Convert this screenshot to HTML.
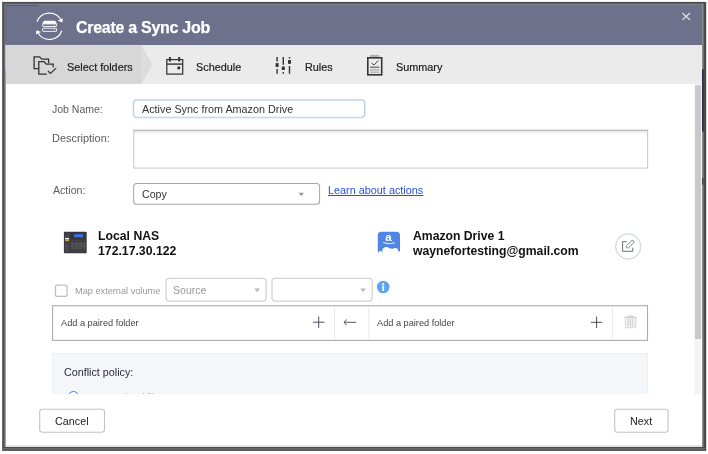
<!DOCTYPE html>
<html>
<head>
<meta charset="utf-8">
<title>Create a Sync Job</title>
<style>
  html, body { margin: 0; padding: 0; }
  body {
    width: 708px; height: 454px; overflow: hidden; background: #fff;
    font-family: "Liberation Sans", sans-serif; color: #333;
    position: relative;
  }
  .abs { position: absolute; }
  .t { position: absolute; white-space: nowrap; line-height: 14px; z-index: 3; will-change: transform; }
  .steplbl { font-size: 10.85px; color: #222; top: 60.1px; -webkit-text-stroke: 0.2px #222; }
  .lbl { font-size: 10.6px; color: #5c5c5c; }
  svg.bg { z-index: 0; }
  svg.boxes { z-index: 1; }
  svg { position: absolute; left: 0; top: 0; overflow: visible; z-index: 2; pointer-events: none; }
</style>
</head>
<body>
<!-- window frame, header and step bar backgrounds -->
<svg class="bg" width="708" height="454" viewBox="0 0 708 454">
  <rect x="2.2" y="1.9" width="704" height="449" fill="#4c4c4c"/>
  <rect x="2.2" y="1.9" width="0.9" height="449" fill="#686868"/>
  <rect x="3" y="448.2" width="702" height="1.3" fill="#707070"/>
  <rect x="5.2" y="4.7" width="697" height="442.1" fill="#fff"/>
  <rect x="5.2" y="444.9" width="697" height="1.9" fill="#e6e6e6"/>
  <rect x="5.2" y="4.7" width="697" height="40.5" fill="#6d718c"/>
  <rect x="5.2" y="45.2" width="697" height="38.6" fill="#ebebeb"/>
  <path d="M141 45.2 H141.6 L152.5 64.5 L141.6 83.8 H141 Z" fill="#dcdcdc"/>
  <rect x="5.2" y="45.2" width="136.2" height="38.6" fill="#d7d7d7"/>
  <rect x="5.2" y="4.7" width="33" height="1" fill="#46528e"/>
  <rect x="5.2" y="4.7" width="0.9" height="40" fill="#505c96"/>
  <rect x="4.4" y="3.7" width="699" height="1" fill="#7e8294"/>
  <rect x="4.4" y="3.7" width="0.9" height="67" fill="#7e8298"/>
  <rect x="4.4" y="70.6" width="1.3" height="376.2" fill="#888"/>
  <rect x="702" y="3.7" width="1.5" height="65.6" fill="#8e8e8e"/>
  <rect x="702" y="69.3" width="1.5" height="62.4" fill="#2c3040"/>
  <rect x="702" y="131.7" width="1.5" height="315.2" fill="#8c8c8c"/>
  <rect x="702" y="178" width="1.5" height="6.6" fill="#444"/>
  <rect x="694.3" y="83.8" width="6.9" height="310.4" fill="#f4f4f4"/>
  <rect x="695" y="85.2" width="6.2" height="253.8" fill="#c9c9c9"/>
</svg>
<div class="t" style="left:76.2px;top:17.8px;font-size:16px;letter-spacing:-0.28px;font-weight:bold;color:#fff;line-height:20px;-webkit-text-stroke:0.25px #fff">Create a Sync Job</div>

<!-- input boxes, table and buttons -->
<svg class="boxes" width="708" height="454" viewBox="0 0 708 454" fill="#fff">
  <defs>
    <linearGradient id="tashade" x1="0" y1="0" x2="0" y2="1">
      <stop offset="0" stop-color="#000" stop-opacity="0.09"/>
      <stop offset="1" stop-color="#000" stop-opacity="0"/>
    </linearGradient>
  </defs>
  <!-- job name -->
  <rect x="133.65" y="100.1" width="230.95" height="17.2" rx="3" fill="none" stroke="#8fb2ea" stroke-opacity="0.2" stroke-width="2.8"/>
  <rect x="133.65" y="100.1" width="230.95" height="17.2" rx="3" stroke="#bacdec" stroke-width="1.1"/>
  <!-- description -->
  <rect x="133.8" y="130.4" width="513.8" height="37.7" stroke="#cbcbcb" stroke-width="1.1"/>
  <rect x="134.4" y="131" width="512.6" height="4" fill="url(#tashade)"/>
  <path d="M133.3 130.4 H648.1" stroke="#bdbdbd" stroke-width="1.1"/>
  <!-- action select -->
  <rect x="133.65" y="183.5" width="185.95" height="20.7" rx="3" stroke="#a8a8a8" stroke-width="1.05"/>
  <!-- checkbox -->
  <rect x="55.45" y="285.1" width="11.65" height="11.3" rx="2" stroke="#b9c0cb" stroke-width="1.3"/>
  <!-- source selects -->
  <rect x="166" y="278.3" width="100.1" height="22.8" rx="3" stroke="#d2d2d2" stroke-width="1.25"/>
  <rect x="272" y="278.3" width="100.2" height="22.8" rx="3" stroke="#d2d2d2" stroke-width="1.25"/>
  <!-- paired folder table -->
  <rect x="52.55" y="305.7" width="594.95" height="34.7" stroke="#adadad" stroke-width="1.1"/>
  <path d="M334.6 306.3 V339.8 M368.9 306.3 V339.8 M612.4 306.3 V339.8" stroke="#e8e8e8" stroke-width="1"/>
  <!-- buttons -->
  <rect x="39.7" y="409.25" width="64.8" height="22.95" rx="2.6" stroke="#c4c4c4" stroke-width="1.1"/>
  <rect x="614.7" y="409.25" width="53.4" height="22.95" rx="2.6" stroke="#c4c4c4" stroke-width="1.1"/>
</svg>

<!-- all icons drawn in page coordinates -->
<svg width="708" height="454" viewBox="0 0 708 454" fill="none">
  <!-- sync logo -->
  <g stroke="#fff" stroke-width="1.2" fill="none">
    <path d="M37 21.8 A13.2 13.2 0 0 1 60.6 19.3"/>
    <path d="M61.8 30.8 A13.2 13.2 0 0 1 38.2 33.3"/>
  </g>
  <path d="M57.7 20.6 L62.9 18.2 L62.3 22.4 Z" fill="#fff"/>
  <path d="M41.1 32 L35.9 34.4 L36.5 30.2 Z" fill="#fff"/>
  <path d="M42.2 23.8 L43.5 21.5 Q43.8 20.8 44.6 20.8 H54.6 Q55.4 20.8 55.7 21.5 L57 23.8 Z" fill="#fff"/>
  <rect x="42.65" y="23.9" width="13.9" height="2.6" rx="0.4" stroke="#fff" stroke-width="0.9"/>
  <rect x="42.65" y="28.25" width="13.9" height="3.1" rx="0.4" stroke="#fff" stroke-width="0.9"/>
  <path d="M53.6 25.2 H55 M53.6 29.5 H55" stroke="#fff" stroke-width="0.5"/>

  <!-- close -->
  <path d="M682.4 13 L690 19.8 M690 13 L682.4 19.8" stroke="#e8e8f0" stroke-width="1.1"/>

  <!-- select folders icon -->
  <g stroke="#333" stroke-width="1.3" stroke-linejoin="miter">
    <path d="M38.7 68.6 H34.1 V56.8 H39.6 L41.9 59.1 H48.6 V63.2"/>
    <path d="M46.8 74.1 H38.8 V61.7 H44 L46.3 64.1 H53.2 V67.2"/>
    <path d="M47.9 71 L50.4 73.4 L56.2 68.1" stroke-width="1.2"/>
  </g>

  <!-- schedule icon -->
  <g stroke="#333">
    <rect x="166.8" y="59.6" width="15.9" height="14.5" stroke-width="1.25"/>
    <path d="M166.8 64.1 H182.7" stroke-width="1.4"/>
    <path d="M169.9 57 V61.4 M179.2 57 V61.4" stroke-width="1.9"/>
  </g>
  <rect x="177.4" y="66.5" width="2.8" height="2.8" fill="#333"/>

  <!-- rules icon -->
  <g stroke="#333" stroke-width="1.4">
    <path d="M277.1 57 V61.4 M277.1 69 V73.7"/>
    <path d="M283.3 57 V64.8 M283.3 72.1 V73.7"/>
    <path d="M289.5 57 V58.4 M289.5 66 V73.7"/>
  </g>
  <g fill="#333">
    <rect x="275.6" y="63.1" width="3" height="3.8"/>
    <rect x="281.8" y="66.5" width="3" height="3.5"/>
    <rect x="288" y="60.1" width="3" height="3.7"/>
  </g>

  <!-- summary icon -->
  <rect x="370.1" y="54.9" width="9.2" height="2" fill="#b0b0b0"/>
  <rect x="367.8" y="57.8" width="13.9" height="17" stroke="#333" stroke-width="1.6"/>
  <path d="M371.5 63 L374 65 L378.3 60.5" stroke="#333" stroke-width="0.9"/>
  <path d="M370.1 67.2 H379.3" stroke="#333" stroke-width="0.9"/>
  <rect x="370.1" y="69" width="9.2" height="4" fill="#d8d8d8"/>
  <path d="M370.1 69.8 H379.3 M370.1 72.3 H379.3" stroke="#aaa" stroke-width="0.9"/>

  <!-- select arrows -->
  <path d="M298.7 192.8 H303.9 L301.3 196.3 Z" fill="#999"/>
  <path d="M254.3 288.4 H259.9 L257.1 292.2 Z" fill="#b8b8b8"/>
  <path d="M360.3 288.4 H365.9 L363.1 292.2 Z" fill="#b8b8b8"/>
</svg>

<div class="t steplbl" style="left:66.9px">Select folders</div>
<div class="t steplbl" style="left:196.3px">Schedule</div>
<div class="t steplbl" style="left:304.8px">Rules</div>
<div class="t steplbl" style="left:396.4px">Summary</div>

<!-- form -->
<div class="t lbl" style="left:52.4px;top:102.2px;font-size:10.5px">Job Name:</div>
<div class="t" style="left:141.7px;top:102.1px;font-size:10.8px;color:#333">Active Sync from Amazon Drive</div>

<div class="t lbl" style="left:52.1px;top:131.4px;font-size:10.95px">Description:</div>

<div class="t lbl" style="left:53.1px;top:182.9px">Action:</div>
<div class="t" style="left:141.7px;top:187.2px;font-size:10.6px;color:#333">Copy</div>
<div class="t" style="left:328.2px;top:183.1px;font-size:10.85px;color:#2450e0;text-decoration:underline;text-underline-offset:1px;text-decoration-thickness:0.9px">Learn about actions</div>

<!-- NAS icon -->
<svg width="708" height="454" viewBox="0 0 708 454" fill="none">
  <rect x="63.9" y="231.8" width="22.8" height="21.5" rx="0.8" fill="#37373b"/>
  <rect x="64.6" y="232.6" width="5.6" height="19.9" fill="#434347"/>
  <rect x="74.1" y="234.2" width="8.9" height="3" fill="#3e72e6"/>
  <rect x="65.1" y="237.9" width="4" height="1.5" fill="#f4f0e6"/>
  <rect x="65.1" y="239.4" width="4" height="1.7" fill="#d9a040"/>
  <rect x="71" y="241.9" width="3.4" height="7.6" fill="#505055"/>
  <rect x="74.9" y="241.9" width="3.4" height="7.6" fill="#505055"/>
  <rect x="78.7" y="241.9" width="3.4" height="7.6" fill="#505055"/>
  <rect x="82.5" y="241.9" width="3.2" height="7.6" fill="#505055"/>
  <rect x="71" y="239.6" width="14.7" height="1.4" fill="#444448"/>
  <rect x="71" y="250.4" width="14.7" height="1.6" fill="#444448"/>
  <circle cx="66.8" cy="246" r="0.9" fill="#5a5a60"/>
  <circle cx="66.8" cy="249.6" r="0.9" fill="#5a5a60"/>

  <!-- Amazon Drive icon -->
  <rect x="377.8" y="231.8" width="22.2" height="22" rx="3.6" fill="#4f86e6"/>
  <path d="M383.2 242.5 Q389 245.2 394.9 242.7" stroke="#fff" stroke-width="0.9"/>
  <g fill="#fff">
    <circle cx="386.4" cy="251.2" r="4.2"/>
    <circle cx="395.2" cy="251" r="3"/>
    <circle cx="391" cy="251.6" r="3.1"/>
    <circle cx="380.4" cy="253" r="1.9"/>
    <circle cx="398.4" cy="252.8" r="1.7"/>
    <rect x="377" y="253.2" width="24" height="2.4"/>
  </g>

  <!-- edit button -->
  <circle cx="628.2" cy="246.5" r="12.5" fill="#fff" stroke="#d9dee3" stroke-width="1.5"/>
  <g stroke="#585c70" stroke-width="0.9">
    <path d="M626.7 241.6 H622.6 V251.3 H632.8 V247.6"/>
    <path d="M626.6 245.6 L631.6 240.8 Q632.6 240 633.6 240.9 Q634.5 241.9 633.6 242.9 L628.6 247.7 Q627.6 248.5 626.6 247.6 Q625.8 246.6 626.6 245.6 Z" stroke-width="0.8"/>
  </g>

  <!-- info icon -->
  <circle cx="383.2" cy="287" r="6.3" fill="#5fa4f0"/>
  <rect x="382.3" y="285.6" width="1.8" height="5.4" fill="#fff"/>
  <rect x="382.3" y="283.2" width="1.8" height="1.7" fill="#fff"/>

  <!-- plus / arrow / trash -->
  <g stroke="#3a3d4a" stroke-width="0.9">
    <path d="M318.7 316.5 V327.9 M313 322.2 H324.4"/>
    <path d="M596.6 316.6 V328 M590.9 322.3 H602.3"/>
  </g>
  <path d="M356.2 322.3 H344 M346.8 319.6 L343.9 322.3 L346.8 325" stroke="#505050" stroke-width="0.95"/>
  <rect x="627.4" y="315.4" width="6.3" height="2" fill="#d8d8d8"/>
  <rect x="625.4" y="317.4" width="10.5" height="10.3" rx="0.8" fill="#f0f0f0" stroke="#cfcfcf" stroke-width="0.8"/>
  <path d="M624 317.4 H636.9" stroke="#c8c8c8" stroke-width="0.9"/>
  <path d="M628.3 318.9 V326.1 M630.5 318.9 V326.1 M632.7 318.9 V326.1" stroke="#c8c8c8" stroke-width="0.8"/>
</svg>
<div class="t" style="left:385.2px;top:231.6px;width:7px;text-align:center;font-size:11.5px;font-weight:bold;color:#fff;line-height:11px">a</div>

<div class="t" style="left:98.2px;top:228.7px;font-size:12.25px;font-weight:bold;line-height:15.5px;color:#111">Local NAS</div>
<div class="t" style="left:98.2px;top:244.2px;font-size:12.25px;font-weight:bold;line-height:15.5px;color:#111">172.17.30.122</div>
<div class="t" style="left:412.9px;top:228.7px;font-size:12.2px;font-weight:bold;line-height:15.5px;color:#111">Amazon Drive 1</div>
<div class="t" style="left:412.9px;top:244.2px;font-size:12.2px;font-weight:bold;line-height:15.5px;color:#111">waynefortesting@gmail.com</div>

<!-- map external volume -->
<div class="t" style="left:75.3px;top:284.2px;font-size:9.2px;color:#999">Map external volume</div>
<div class="t" style="left:173.2px;top:283.1px;font-size:10.55px;color:#999">Source</div>

<!-- paired folders -->
<div class="t" style="left:61px;top:316px;font-size:9.2px;color:#444">Add a paired folder</div>
<div class="t" style="left:377.3px;top:316px;font-size:9.2px;color:#444">Add a paired folder</div>

<!-- conflict policy -->
<div class="abs" style="left:52.2px;top:352.7px;width:595.8px;height:41.5px;overflow:hidden">
  <div class="abs" style="left:0;top:0;width:595.8px;height:60px;background:#f5f6f9;box-sizing:border-box;border:1px solid #eceef2"></div>
  <div class="t" style="left:12px;top:12.2px;font-size:10.76px;color:#2a2d3a">Conflict policy:</div>
  <div class="abs" style="left:15.7px;top:38.7px;width:11.4px;height:11.4px;box-sizing:border-box;border:1.5px solid #4a7be0;border-radius:50%;background:#fff"></div>
  <div class="t" style="left:35.8px;top:37.2px;font-size:9.25px;color:#a8a8a8">Rename local files</div>
</div>

<!-- footer -->
<div class="t" style="left:39.4px;width:65.6px;text-align:center;top:413.8px;font-size:10.78px;color:#222">Cancel</div>
<div class="t" style="left:614.4px;width:54.2px;text-align:center;top:413.8px;font-size:10.78px;color:#222">Next</div>
</body>
</html>
